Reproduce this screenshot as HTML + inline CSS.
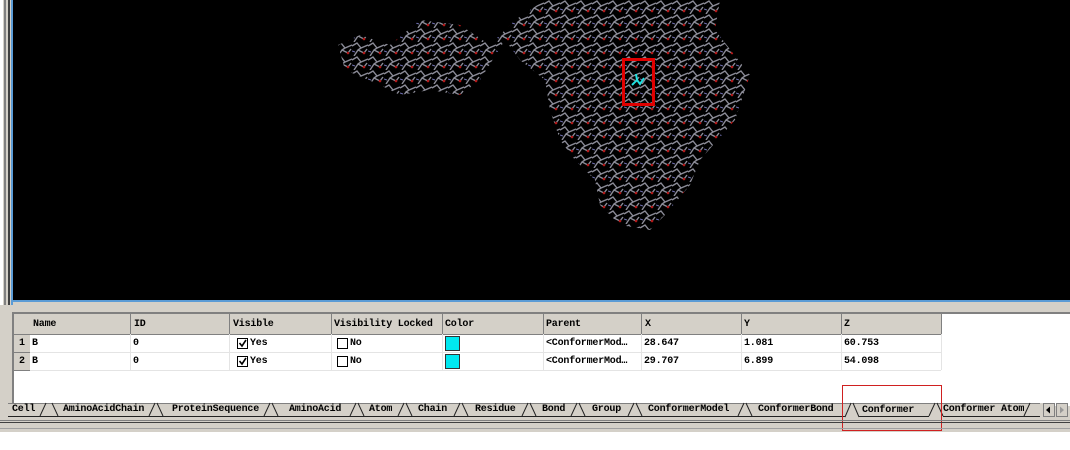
<!DOCTYPE html>
<html><head><style>
html,body{margin:0;padding:0;width:1070px;height:450px;overflow:hidden;background:#fff;font-family:"Liberation Mono","Noto Sans CJK SC",monospace;}
.abs{position:absolute}
.t{font-size:10px;color:#000;white-space:nowrap;font-weight:bold;letter-spacing:-0.2px}
</style></head><body>
<div class="abs" style="left:0;top:0;width:1070px;height:432px;background:#d4d0c8"></div>
<div class="abs" style="left:0;top:0;width:3px;height:305px;background:#fff"></div>
<div class="abs" style="left:4px;top:0;width:2px;height:305px;background:#808080"></div>
<div class="abs" style="left:8px;top:0;width:2px;height:305px;background:#404040"></div>
<div class="abs" style="left:11px;top:0;width:2px;height:305px;background:#5b9bd5"></div>
<div class="abs" style="left:13px;top:0;width:1057px;height:300px;background:#000"></div>
<div class="abs" style="left:11px;top:300px;width:1059px;height:2px;background:#5b9bd5"></div>
<svg class="abs" style="left:0;top:0" width="1070" height="300">
<defs>
<pattern id="p" width="16" height="14" patternUnits="userSpaceOnUse">
<path d="M0 4 L5 1 L9 6 L16 3 M2 14 L6 8 L12 11 L15 7 M9 6 L6 8" stroke="#8c8c98" stroke-width="1.4" fill="none"/>
<circle cx="12" cy="11" r="1.3" fill="#b01818"/>
<path d="M0 9 L3 10" stroke="#7070b0" stroke-width="1"/>
</pattern>
</defs>
<path d="M545 0 L720 0 L715 30 L750 75 L735 120 L700 160 L690 185 L665 215 L650 230 L620 225 L600 205 L595 180 L575 160 L560 140 L550 110 L545 80 L520 60 L505 40 L480 80 L460 95 L430 90 L400 95 L380 85 L345 70 L338 45 L360 35 L390 45 L420 20 L460 25 L490 45 L515 20 Z" fill="url(#p)"/>
<rect x="623.5" y="59.5" width="30" height="45" fill="none" stroke="#e00000" stroke-width="3"/>
<path d="M632 85 L637 80 L640 84 L644 78 M637 80 L636 74" stroke="#20e0e0" stroke-width="2" fill="none"/>
</svg>
<div class="abs" style="left:12px;top:312px;width:1058px;height:92px;background:#fff;border-top:2px solid #808080;border-left:2px solid #808080"></div>
<div class="abs" style="left:14px;top:314px;width:927px;height:20px;background:#d4d0c8"></div>
<div class="abs" style="left:14px;top:334px;width:16px;height:36px;background:#d4d0c8"></div>
<svg class="abs" style="left:0;top:0" width="1070" height="450">
<g stroke="#808080" stroke-width="1">
<path d="M130.5 314V334M229.5 314V334M331.5 314V334M442.5 314V334M543.5 314V334M641.5 314V334M741.5 314V334M841.5 314V334M941.5 314V334"/>
<path d="M14 334.5H941"/>
<path d="M14 352.5H30M14 370.5H30"/>
</g>
<g stroke="#e4e4e4" stroke-width="1">
<path d="M30 352.5H941M30 370.5H941M130.5 334V370M229.5 334V370M331.5 334V370M442.5 334V370M543.5 334V370M641.5 334V370M741.5 334V370M841.5 334V370M941.5 334V370"/>
</g>
<g fill="#fff" stroke="#000">
<rect x="237.5" y="338.5" width="10" height="10"/><rect x="237.5" y="356.5" width="10" height="10"/>
<rect x="337.5" y="338.5" width="10" height="10"/><rect x="337.5" y="356.5" width="10" height="10"/>
</g>
<path d="M239.5 343L242 346L246 340M239.5 361L242 364L246 358" stroke="#000" stroke-width="1.6" fill="none"/>
<rect x="445.5" y="336.5" width="14" height="14" fill="#00e8f0" stroke="#333"/>
<rect x="445.5" y="354.5" width="14" height="14" fill="#00e8f0" stroke="#333"/>
<rect x="8" y="403" width="1035" height="14" fill="#d4d0c8"/>
<path d="M8 403.5H1040" stroke="#808080"/>
<g stroke="#222" fill="none" stroke-width="1">
<path d="M40 416L46 403M52 403L58 416"/>
<path d="M149 416L155 403M157 403L163 416"/>
<path d="M264 416L270 403M272 403L278 416"/>
<path d="M350 416L356 403M358 403L364 416"/>
<path d="M398 416L404 403M406 403L412 416"/>
<path d="M454 416L460 403M462 403L468 416"/>
<path d="M522 416L528 403M530 403L536 416"/>
<path d="M571 416L577 403M579 403L585 416"/>
<path d="M628 416L634 403M636 403L642 416"/>
<path d="M738 416L744 403M746 403L752 416"/>
<path d="M845 417L851 403M853 403L859 417"/>
<path d="M929 416L935 403M937 403L943 416"/>
<path d="M1024 416L1030 403"/>
<path d="M8 416.5H845M859 416.5H929M943 416.5H1040"/>
</g>
<rect x="842.5" y="385.5" width="99" height="45" fill="none" stroke="#d02020"/>
<rect x="1043.5" y="403.5" width="11" height="13" fill="#d4d0c8" stroke="#808080"/>
<rect x="1056.5" y="403.5" width="11" height="13" fill="#d4d0c8" stroke="#808080"/>
<path d="M1046 410L1050 406.5V413.5Z" fill="#000"/><path d="M1064 410L1060 406.5V413.5Z" fill="#999"/>
<path d="M0 420.5H1070" stroke="#808080"/><path d="M0 422.5H1070" stroke="#404040"/>
<path d="M0 428.5H1070" stroke="#a0a0a0"/>
</svg>
<div class="abs" style="left:0;top:432px;width:1070px;height:18px;background:#fff"></div>
<div class="abs t" style="left:33px;top:319px">Name</div>
<div class="abs t" style="left:134px;top:319px">ID</div>
<div class="abs t" style="left:233px;top:319px">Visible</div>
<div class="abs t" style="left:334px;top:319px">Visibility Locked</div>
<div class="abs t" style="left:445px;top:319px">Color</div>
<div class="abs t" style="left:546px;top:319px">Parent</div>
<div class="abs t" style="left:645px;top:319px">X</div>
<div class="abs t" style="left:744px;top:319px">Y</div>
<div class="abs t" style="left:844px;top:319px">Z</div>
<div class="abs t" style="left:19px;top:338px">1</div>
<div class="abs t" style="left:19px;top:356px">2</div>
<div class="abs t" style="left:32px;top:338px">B</div><div class="abs t" style="left:32px;top:356px">B</div>
<div class="abs t" style="left:133px;top:338px">0</div><div class="abs t" style="left:133px;top:356px">0</div>
<div class="abs t" style="left:250px;top:338px">Yes</div><div class="abs t" style="left:250px;top:356px">Yes</div>
<div class="abs t" style="left:350px;top:338px">No</div><div class="abs t" style="left:350px;top:356px">No</div>
<div class="abs t" style="left:546px;top:338px">&lt;ConformerMod…</div><div class="abs t" style="left:546px;top:356px">&lt;ConformerMod…</div>
<div class="abs t" style="left:644px;top:338px">28.647</div><div class="abs t" style="left:644px;top:356px">29.707</div>
<div class="abs t" style="left:744px;top:338px">1.081</div><div class="abs t" style="left:744px;top:356px">6.899</div>
<div class="abs t" style="left:844px;top:338px">60.753</div><div class="abs t" style="left:844px;top:356px">54.098</div>
<div class="abs t" style="left:12px;top:404px">Cell</div>
<div class="abs t" style="left:63px;top:404px">AminoAcidChain</div>
<div class="abs t" style="left:172px;top:404px">ProteinSequence</div>
<div class="abs t" style="left:289px;top:404px">AminoAcid</div>
<div class="abs t" style="left:369px;top:404px">Atom</div>
<div class="abs t" style="left:418px;top:404px">Chain</div>
<div class="abs t" style="left:475px;top:404px">Residue</div>
<div class="abs t" style="left:542px;top:404px">Bond</div>
<div class="abs t" style="left:592px;top:404px">Group</div>
<div class="abs t" style="left:648px;top:404px">ConformerModel</div>
<div class="abs t" style="left:758px;top:404px">ConformerBond</div>
<div class="abs t" style="left:862px;top:405px">Conformer</div>
<div class="abs t" style="left:943px;top:404px">Conformer Atom</div>
</body></html>
